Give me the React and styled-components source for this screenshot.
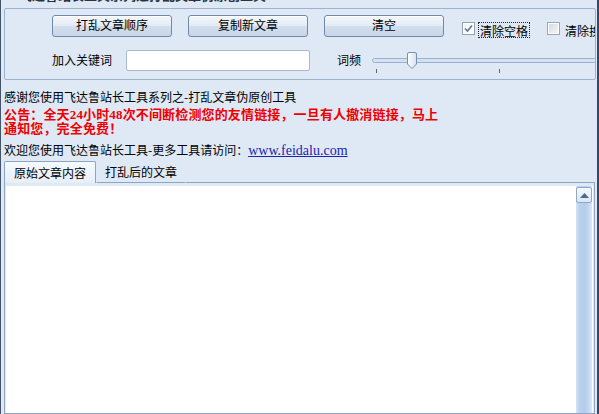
import React from 'react';
import styled, { createGlobalStyle } from 'styled-components';

const GlobalStyle = createGlobalStyle`
  html, body {
    margin: 0;
    padding: 0;
    background: #dfe9f5;
  }
  * {
    box-sizing: border-box;
  }
`;

const cjk = `"Noto Sans CJK SC", "Liberation Sans", sans-serif`;

// Window frame
const Window = styled.div`
  width: 599px;
  height: 414px;
  overflow: hidden;
  display: flex;
  flex-direction: column;
  background: #dfe9f5;
  border-left: 1px solid #44546a;
  border-right: 2px solid #34496a;
  padding-left: 3px;
  font-family: ${cjk};
  font-size: 12px;
  color: #000;
`;

const TitleStrip = styled.div`
  height: 4px;
  overflow: hidden;
  padding-left: 15px;
  flex-shrink: 0;
`;

const TitleText = styled.div`
  margin-top: -13px;
  font-size: 13px;
  font-weight: bold;
  line-height: 16px;
  color: #2b3340;
  white-space: nowrap;
`;

// Settings group box
const GroupBox = styled.div`
  height: 72px;
  margin-top: 4px;
  margin-right: 1px;
  border: 1px solid #9db2cc;
  border-radius: 2px;
  padding: 6px 0 0 47px;
  flex-shrink: 0;
  overflow: hidden;
`;

const Row = styled.div`
  display: flex;
  align-items: flex-start;
  white-space: nowrap;
  margin-top: ${(p) => p.$top || 0}px;
  gap: ${(p) => p.$gap || 0}px;
`;

const Button = styled.div`
  width: 120px;
  height: 22px;
  flex-shrink: 0;
  display: flex;
  align-items: center;
  justify-content: center;
  border: 1px solid #7189a9;
  border-radius: 3px;
  background: linear-gradient(to bottom, #f3f7fc 0%, #e3ebf5 48%, #d2deed 52%, #c6d5e8 100%);
  box-shadow: inset 0 1px 0 #ffffff;
  font-size: 12px;
  line-height: 14px;
  padding-bottom: 2px;
`;

const CheckGroup = styled.div`
  display: flex;
  align-items: flex-start;
  margin-top: 7px;
  margin-left: ${(p) => p.$left || 0}px;
  flex-shrink: 0;
`;

const Box = styled.div`
  width: 13px;
  height: 13px;
  flex-shrink: 0;
  border: 1px solid ${(p) => (p.$checked ? '#92a2b6' : '#9ba6b3')};
  background: ${(p) =>
    p.$checked
      ? 'linear-gradient(135deg, #eef2f7, #ffffff)'
      : 'linear-gradient(135deg, #d3d9e1, #f5f7fa)'};
  box-shadow: inset 0 0 0 1px #ffffff;
  display: flex;
  align-items: center;
  justify-content: center;
`;

const CheckLabel = styled.span`
  margin-left: 3px;
  height: 16px;
  padding: 0 1px;
  line-height: 15px;
  font-size: 12px;
  border: 1px ${(p) => (p.$focused ? 'dotted #222' : 'solid transparent')};
`;

const FieldLabel = styled.span`
  height: 21px;
  line-height: 19px;
  font-size: 12px;
  flex-shrink: 0;
  margin-left: ${(p) => p.$left || 0}px;
`;

const Input = styled.div`
  width: 184px;
  height: 21px;
  flex-shrink: 0;
  margin-left: ${(p) => p.$left || 0}px;
  background: #ffffff;
  border: 1px solid #a7b8cf;
  border-radius: 2px;
`;

const Slider = styled.div`
  position: relative;
  width: 240px;
  height: 24px;
  flex-shrink: 0;
  margin-left: 11px;
`;

const Track = styled.div`
  margin-top: 8px;
  height: 5px;
  border: 1px solid #9bb1cd;
  border-radius: 3px;
  background: #d3e1f2;
`;

const Ticks = styled.div`
  display: flex;
  margin-top: 6px;
  padding-left: 4px;
  gap: 122px;
`;

const Tick = styled.span`
  width: 1px;
  height: 4px;
  background: #5a6678;
`;

const Thumb = styled.svg`
  position: absolute;
  left: 35px;
  top: 2px;
`;

// Info text
const InfoLine = styled.div`
  margin-top: ${(p) => p.$top || 0}px;
  line-height: ${(p) => p.$lh || 14}px;
  font-size: 12px;
  white-space: nowrap;
  flex-shrink: 0;
`;

const Notice = styled.div`
  margin-top: 4px;
  width: 445px;
  font-family: "Liberation Serif", ${cjk};
  font-size: 13px;
  font-weight: bold;
  line-height: 14px;
  letter-spacing: 0.15px;
  color: #ee0000;
  flex-shrink: 0;
`;

const SiteLink = styled.a`
  font-family: "Liberation Serif", serif;
  font-size: 14px;
  color: #1a24b0;
  text-decoration: underline;
`;

// Tabs
const TabBar = styled.div`
  display: flex;
  height: 22px;
  margin-top: 2px;
  margin-right: 2px;
  flex-shrink: 0;
`;

const Tab = styled.div`
  width: ${(p) => (p.$active ? '92px' : 'auto')};
  padding: ${(p) => (p.$active ? '0 0 0 9px' : '0 8px')};
  display: flex;
  align-items: center;
  font-size: 12px;
  border: 1px solid ${(p) => (p.$active ? '#8ca5c4' : 'transparent')};
  border-bottom: ${(p) => (p.$active ? 'none' : '1px solid #8ca5c4')};
  border-radius: 2px 2px 0 0;
  background: ${(p) =>
    p.$active ? 'linear-gradient(to bottom, #f7faff, #e6eef9)' : 'transparent'};
  padding-bottom: 1px;
`;

const TabFill = styled.div`
  flex: 1;
  border-bottom: 1px solid #8ca5c4;
`;

const Pane = styled.div`
  flex: 1;
  display: flex;
  margin-right: 2px;
  border: 1px solid #8ca5c4;
  border-top: none;
  padding: 3px 1px 0 1px;
`;

const Editor = styled.div`
  flex: 1;
  display: flex;
  justify-content: flex-end;
  background: #ffffff;
  padding-right: 1px;
`;

const Scrollbar = styled.div`
  width: 16px;
  display: flex;
  flex-direction: column;
  padding-top: 1px;
  background: linear-gradient(to right, #d5e3f5 0%, #bcd2ee 20%, #b4ccec 55%, #c4d7f0 80%, #dce8f7 100%);
`;

const ArrowButton = styled.div`
  height: 16px;
  display: flex;
  align-items: center;
  justify-content: center;
  border: 1px solid #8ea8c8;
  border-radius: 2px;
  background: linear-gradient(to bottom, #f4f8fd, #d9e6f6);
`;

const Check = () => (
  <svg width="9" height="9" viewBox="0 0 9 9">
    <path d="M1 4.5 L3.5 7 L8 1.5" fill="none" stroke="#66788f" strokeWidth="1.6" />
  </svg>
);

export default function App() {
  return (
    <>
      <GlobalStyle />
      <Window>
        <TitleStrip>
          <TitleText>飞达鲁站长工具系列之打乱文章伪原创工具</TitleText>
        </TitleStrip>

        <GroupBox>
          <Row $gap={16}>
            <Button>打乱文章顺序</Button>
            <Button>复制新文章</Button>
            <Button>清空</Button>
            <CheckGroup $left={2}>
              <Box $checked>
                <Check />
              </Box>
              <CheckLabel $focused>清除空格</CheckLabel>
            </CheckGroup>
            <CheckGroup $left={1}>
              <Box />
              <CheckLabel>清除换行</CheckLabel>
            </CheckGroup>
          </Row>
          <Row $top={12}>
            <FieldLabel>加入关键词</FieldLabel>
            <Input $left={14} />
            <FieldLabel $left={27}>词频</FieldLabel>
            <Slider>
              <Track />
              <Ticks>
                <Tick />
                <Tick />
              </Ticks>
              <Thumb width="10" height="17" viewBox="0 0 10 17">
                <defs>
                  <linearGradient id="thumbFill" x1="0" y1="0" x2="1" y2="0">
                    <stop offset="0" stopColor="#ffffff" />
                    <stop offset="1" stopColor="#d4e1f1" />
                  </linearGradient>
                </defs>
                <path
                  d="M0.5 2 Q0.5 0.5 2 0.5 H8 Q9.5 0.5 9.5 2 V12 L5 16.5 L0.5 12 Z"
                  fill="url(#thumbFill)"
                  stroke="#7890ae"
                />
              </Thumb>
            </Slider>
          </Row>
        </GroupBox>

        <InfoLine $top={10}>感谢您使用飞达鲁站长工具系列之-打乱文章伪原创工具</InfoLine>
        <Notice>公告：全天24小时48次不间断检测您的友情链接，一旦有人撤消链接，马上通知您，完全免费！</Notice>
        <InfoLine $top={6} $lh={16}>
          欢迎您使用飞达鲁站长工具-更多工具请访问：<SiteLink href="#">www.feidalu.com</SiteLink>
        </InfoLine>

        <TabBar>
          <Tab $active>原始文章内容</Tab>
          <Tab>打乱后的文章</Tab>
          <TabFill />
        </TabBar>
        <Pane>
          <Editor>
            <Scrollbar>
              <ArrowButton>
                <svg width="9" height="5" viewBox="0 0 9 5">
                  <path d="M0 5 L4.5 0 L9 5 Z" fill="#4d6a8e" />
                </svg>
              </ArrowButton>
            </Scrollbar>
          </Editor>
        </Pane>
      </Window>
    </>
  );
}
